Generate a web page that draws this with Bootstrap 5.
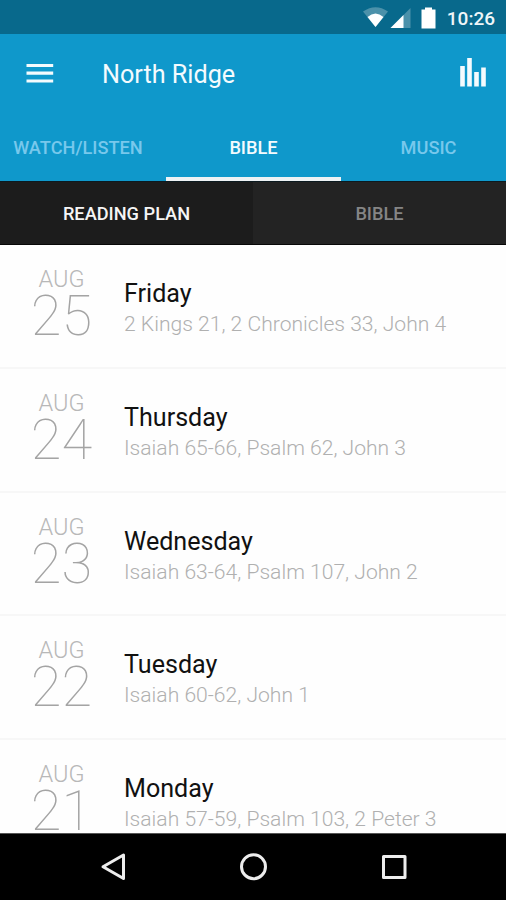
<!DOCTYPE html>
<html lang="en">
<head>
<meta charset="utf-8">
<meta name="viewport" content="width=device-width, initial-scale=1">
<title>North Ridge</title>
<link href="https://cdn.jsdelivr.net/npm/bootstrap@5.3.0/dist/css/bootstrap.min.css" rel="stylesheet">
<style>
body{font-family:Roboto,"Liberation Sans",sans-serif;background:#fefefe;color:#111}
.screen{height:900px}
.status{height:34px;background:#08698c;color:#eef6f9;padding-right:11px}
.clock{font-size:19px;font-weight:500;line-height:34px;padding-top:2px}
.appbar{height:80px;background:#0f98cb;color:#f4fbfe}
.apptitle{font-size:25.2px;line-height:32px;padding-top:2px}
.apptabs{height:67px;background:#0f98cb;font-size:18.2px;font-weight:500}
.apptabs .nav-link,.subtabs .nav-link{border-radius:0;padding:0;text-align:center;white-space:nowrap}
.apptabs .nav-link{color:#78c8ec;line-height:67px;height:67px}
.apptabs .nav-link.active{color:#f4fbfe;border-bottom:4px solid #eef2f4}
.apptabs .tab-a{width:166px;padding-right:10px}
.tab-b{width:175px}
.apptabs .tab-c{width:165px;padding-left:10px}
.subtabs{height:64px;background:#232323;font-size:18.2px;font-weight:500;border-top:1px solid #0c1a20;border-bottom:1px solid #080808}
.subtabs .nav-link{color:#858585;line-height:63px;height:62px}
.subtabs .nav-link.active{color:#f5f5f5;background:#1c1c1c}
.plan{min-height:0}
.plan .list-group-item{height:123.8px;flex:none;border:0;border-bottom:2px solid #f7f7f7;background:#fefefe;padding:22px 0 0}
.date{width:123px;color:#b8b8b8}
.month{font-size:23.5px;line-height:24px;font-weight:300}
.daynum{font-size:56px;line-height:50px;font-weight:100;color:#a4a4a4}
.entry{padding:11px 0 0 1px}
.weekday{font-size:25.1px;line-height:32px;color:#111}
.reading{font-size:21.1px;line-height:27px;font-weight:300;color:#b0b0b0}
.sysnav{height:67px;background:#000;border-top:1px solid #555}
</style>
<script src="https://cdn.jsdelivr.net/npm/bootstrap@5.3.0/dist/js/bootstrap.bundle.min.js"></script>
</head>
<body>
<div class="screen d-flex flex-column overflow-hidden">
  <div class="status d-flex justify-content-end flex-shrink-0">
    <svg width="81" height="34" viewBox="0 0 81 34" aria-hidden="true">
      <path d="M1 11.5Q13.500 3 26 11.500L13.500 27Z" fill="#4b91aa"/>
      <path d="M5.500 17Q13.500 10 21.500 17L13.500 27Z" fill="#fff"/>
      <path d="M48.500 8V28H28.500Z" fill="#4b91aa"/>
      <path d="M41.500 15V28H28.500Z" fill="#fff"/>
      <path d="M59.500 9.500H63V7.500H70V9.500H73.500V28.500H59.500Z" fill="#fff"/>
    </svg>
    <span class="clock ms-1">10:26</span>
  </div>
  <header class="appbar d-flex align-items-center flex-shrink-0">
    <svg width="102" height="80" viewBox="0 0 102 80" aria-label="Menu"><path d="M26.500 31.500H53.200M26.500 39.200H53.200M26.500 47H53.200" stroke="#f4fbfe" stroke-width="3.200"/></svg>
    <span class="apptitle">North Ridge</span>
    <svg class="ms-auto" width="60" height="80" viewBox="0 0 60 80" aria-label="Levels"><path d="M16.500 32V52.500M23.500 24V52.500M30.500 38V52.500M37.500 33.500V52.500" stroke="#f4fbfe" stroke-width="4.600"/></svg>
  </header>
  <nav class="apptabs nav flex-nowrap flex-shrink-0">
    <a class="nav-link tab-a" href="#">WATCH/LISTEN</a>
    <a class="nav-link tab-b active" href="#">BIBLE</a>
    <a class="nav-link tab-c" href="#">MUSIC</a>
  </nav>
  <nav class="subtabs nav nav-fill flex-nowrap flex-shrink-0">
    <a class="nav-link w-50 active" href="#">READING PLAN</a>
    <a class="nav-link w-50" href="#">BIBLE</a>
  </nav>
  <main class="plan list-group list-group-flush flex-grow-1 overflow-hidden">
    <div class="list-group-item d-flex">
      <div class="date text-center"><div class="month">AUG</div><div class="daynum">25</div></div>
      <div class="entry"><div class="weekday">Friday</div><div class="reading">2 Kings 21, 2 Chronicles 33, John 4</div></div>
    </div>
    <div class="list-group-item d-flex">
      <div class="date text-center"><div class="month">AUG</div><div class="daynum">24</div></div>
      <div class="entry"><div class="weekday">Thursday</div><div class="reading">Isaiah 65-66, Psalm 62, John 3</div></div>
    </div>
    <div class="list-group-item d-flex">
      <div class="date text-center"><div class="month">AUG</div><div class="daynum">23</div></div>
      <div class="entry"><div class="weekday">Wednesday</div><div class="reading">Isaiah 63-64, Psalm 107, John 2</div></div>
    </div>
    <div class="list-group-item d-flex">
      <div class="date text-center"><div class="month">AUG</div><div class="daynum">22</div></div>
      <div class="entry"><div class="weekday">Tuesday</div><div class="reading">Isaiah 60-62, John 1</div></div>
    </div>
    <div class="list-group-item d-flex">
      <div class="date text-center"><div class="month">AUG</div><div class="daynum">21</div></div>
      <div class="entry"><div class="weekday">Monday</div><div class="reading">Isaiah 57-59, Psalm 103, 2 Peter 3</div></div>
    </div>
  </main>
  <footer class="sysnav flex-shrink-0">
    <svg class="d-block" width="506" height="66" viewBox="0 0 506 66" fill="none" stroke="#ededed" stroke-width="3" stroke-linejoin="round" aria-hidden="true">
      <path d="M123.500 21V44.500L103 32.700Z"/>
      <circle cx="253.500" cy="32.700" r="12"/>
      <rect x="383.500" y="22.500" width="21.500" height="21" />
    </svg>
  </footer>
</div>
</body>
</html>
